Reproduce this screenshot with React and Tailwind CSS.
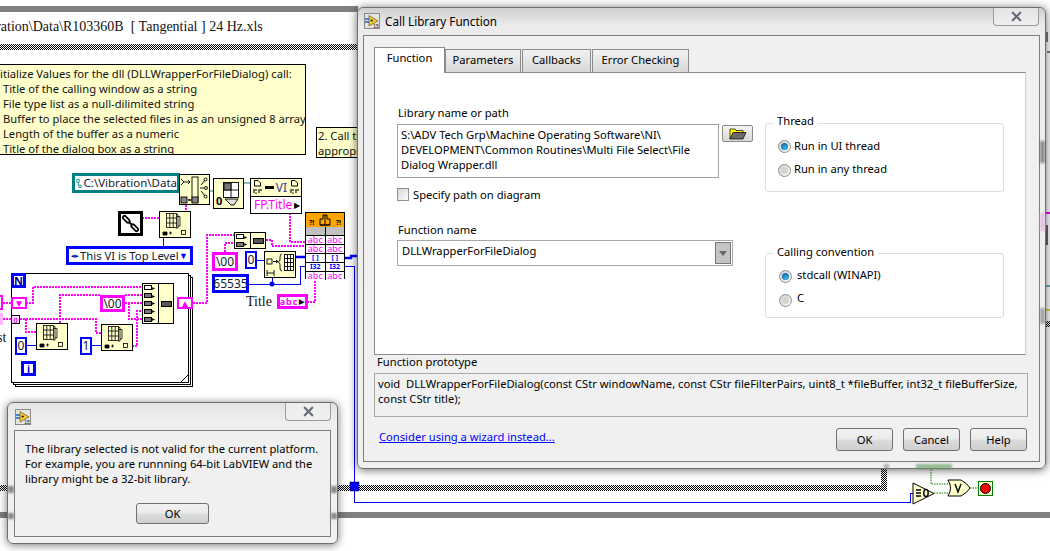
import { X } from 'lucide-react';

const pinkWires = [
  '0,303 11,303',
  '26,303 33,303 33,287 142,287',
  '0,319 11,319',
  '20,319 96,319 96,333 101,333',
  '26,319 26,332 36,332',
  '60,323 60,295 100,295',
  '125,295 142,295',
  '125,303 142,303',
  '129,303 129,319 142,319',
  '132,346 137,346 137,311 142,311',
  '193,303 207,303 207,235 234,235',
  '225,252 225,243 234,243',
  '266,240 272,240 272,246 306,246',
  '290,213 290,242 306,242',
  '307,302 315,302 315,279',
  '142,218 159,218',
  '186,205 186,211',
];

const blueWires = [
  '163,238 163,246',
  '27,345 36,345',
  '92,345 101,345',
  '257,260 264,260',
  '249,284 300,284 300,266 305,266',
  '272,284 272,278',
  '345,266 354,266 354,502 910,502 910,493 914,493',
];

function Wires() {
  return (
    <svg className="absolute inset-0" width="1050" height="551" viewBox="0 0 1050 551" fill="none">
      <defs>
        <pattern id="hatch" width="2" height="2" patternUnits="userSpaceOnUse">
          <rect width="2" height="2" fill="#fff" />
          <rect width="1" height="1" fill="#000" />
          <rect x="1" y="1" width="1" height="1" fill="#000" />
        </pattern>
      </defs>
      <rect x="0" y="485" width="887" height="6" fill="url(#hatch)" />
      <rect x="881" y="462" width="6" height="29" fill="url(#hatch)" />
      {pinkWires.map((points) => (
        <polyline key={points} points={points} stroke="#ff00ff" strokeWidth="2" strokeDasharray="2 1" shapeRendering="crispEdges" />
      ))}
      {blueWires.map((points) => (
        <polyline key={points} points={points} stroke="#0000ff" strokeWidth="1" shapeRendering="crispEdges" />
      ))}
      <path d="M296 257H305M345 258H351V256H358" stroke="#0000ff" strokeWidth="2.4" />
      <circle cx="272" cy="284" r="2.5" fill="#0000ff" />
      <rect x="350" y="482" width="9" height="9" fill="#0000ff" stroke="#000" strokeWidth="0.5" />
      <path d="M244 183H250M209 191H213" stroke="#008080" strokeWidth="1.2" />
      <path d="M931 462V484H948M934 493H948M970 488H978" stroke="#008000" strokeWidth="1" strokeDasharray="1.5 1" />
      <path d="M913 483V504L934 493.5Z" fill="#ffffcc" stroke="#000" />
      <path d="M916 490H921M916 493H921M916 496H921" stroke="#000" strokeWidth="1.4" />
      <ellipse cx="926" cy="493" rx="2.2" ry="3.6" stroke="#000" strokeWidth="1.4" />
      <path d="M948 480H961Q968 484 970 488Q968 492 961 496H948Q953 488 948 480Z" fill="#ffffcc" stroke="#000" />
      <path d="M955 484L958 492L961 484" stroke="#000" strokeWidth="1.4" />
      <rect x="978.5" y="481.5" width="14" height="14" fill="#ffffcc" stroke="#008000" />
      <circle cx="985.5" cy="488.5" r="5" fill="#f00000" stroke="#000" />
      <path d="M1046 213H1050" stroke="#ff00ff" strokeWidth="2" />
      <path d="M1047 225V245" stroke="#000" strokeWidth="1.2" />
      <path d="M1046 286H1050" stroke="#008080" strokeWidth="1.2" />
      <path d="M1046 310H1050" stroke="#d0c000" strokeWidth="1.5" />
      <rect x="1046" y="321" width="4" height="6" fill="url(#hatch)" />
      <path d="M1047 32V42M1047 52H1050" stroke="#000" />
    </svg>
  );
}

function ArrayGlyph() {
  return (
    <svg width="30" height="25" viewBox="0 0 30 25" fill="none" stroke="#000" strokeWidth="0.8">
      <path d="M8 2.5H18V4.5H20V14H18V16H16" />
      <path d="M16 4.5H18V14" />
      <rect x="6.5" y="1.5" width="10" height="14" fill="#ffffcc" />
      <path d="M6.5 6H16.5M6.5 11H16.5M9.8 1.5V15.5M13.2 1.5V15.5" />
      <path d="M3 20H7V23H3Z" fill="#000" />
      <path d="M9 21H12M10.5 19.5V22.5" />
      <rect x="21.5" y="18.5" width="4" height="4" />
    </svg>
  );
}

function BuildGlyph() {
  return (
    <svg width="29" height="29" viewBox="0 0 29 29" fill="none" stroke="#000" strokeWidth="0.9">
      <rect x="12" y="2" width="6" height="25" fill="#ffffcc" />
      <path d="M1 4L4 7L1 10M4 7H10M8 5L10 7L8 9" />
      <path d="M20 13H24M21 10L25 5M21 16L25 21" />
      <circle cx="25.5" cy="4.5" r="1.5" />
      <circle cx="26" cy="13" r="1.5" />
      <circle cx="25.5" cy="21.5" r="1.5" />
      <rect x="1" y="22" width="6" height="6" fill="#888" />
      <rect x="12" y="22" width="6" height="6" fill="#888" />
      <path d="M8 25H11" strokeWidth="1.5" />
    </svg>
  );
}

function PageMark() {
  return (
    <svg width="9" height="15" viewBox="0 0 9 15" fill="none" stroke="#000">
      <path d="M1.5 .5H5L7.5 3V6H1.5Z" />
      <path d="M1 9V13M3 9V11M3 12.5V14M6 9V13M8 9V11" strokeWidth="1.1" />
    </svg>
  );
}

function ConcatNode({ className, rows }) {
  return (
    <div className={`absolute flex border border-black bg-[#ffffcc] ${className}`}>
      <div className="flex w-[16px] flex-col justify-around border-r border-black px-[1px]">
        {rows.map((filled, i) => (
          <div key={i} className="flex items-center">
            <span className={`h-[5px] w-[8px] border border-black ${filled ? 'bg-[#777]' : 'bg-white'}`} />
            <span className="text-[6px] leading-[6px]">▸</span>
          </div>
        ))}
      </div>
      <div className="flex flex-1 items-center justify-center">
        <span className="h-[6px] w-[11px] border border-black bg-[#555]" />
      </div>
    </div>
  );
}

function Constant({ className, children }) {
  return (
    <div className={`absolute flex items-center justify-center border-[#0000ff] bg-white text-[12px] leading-none text-[#123] ${className}`}>
      {children}
    </div>
  );
}

function StringConstant({ className }) {
  return (
    <div className={`absolute flex items-center justify-center border-[3px] border-[#ff00ff] bg-white text-[12px] leading-none text-[#123] ${className}`}>
      \00
    </div>
  );
}

function LibraryNode() {
  const cell = 'border-t border-black bg-white';
  const pink = `${cell} text-[#ff00ff]`;
  const blue = `${cell} text-[7px] font-bold text-[#0000ff]`;
  return (
    <div className="absolute left-[305px] top-[212px] flex h-[67px] w-[40px] flex-col border border-black bg-white">
      <div className="flex h-[18px] items-end justify-between bg-[#ffa500] px-[3px] pb-[1px] text-[7px] font-bold leading-none">
        <span>?!</span>
        <svg width="12" height="13" viewBox="0 0 12 13" fill="none" stroke="#000">
          <path d="M1 12V6H4V2H8V6H11V12ZM1 12H11M6 2V12" />
        </svg>
        <span>?!</span>
      </div>
      <div className="grid flex-1 grid-cols-2 gap-x-[1px] bg-black text-center text-[9px] leading-[8px]">
        <span className="h-[8px] bg-[#c0c0c0]" />
        <span className="h-[8px] bg-[#c0c0c0]" />
        <span className={pink}>abc</span>
        <span className={pink}>abc</span>
        <span className={pink}>abc</span>
        <span className={pink}>abc</span>
        <span className={blue}>[ ]</span>
        <span className={blue}>[ ]</span>
        <span className={blue}>I32</span>
        <span className={blue}>I32</span>
        <span className={pink}>abc</span>
        <span className={pink}>abc</span>
      </div>
    </div>
  );
}

function Diagram() {
  const noteLines = [
    'Title of the calling window as a string',
    'File type list as a null-dilimited string',
    'Buffer to place the selected files in as an unsigned 8 array',
    'Length of the buffer as a numeric',
    'Title of the dialog box as a string',
  ];

  return (
    <>
      {/* loop frames sit under the wires */}
      <div className="absolute left-[15px] top-[277px] h-[110px] w-[178px] border border-black bg-white" />
      <div className="absolute left-[13px] top-[275px] h-[110px] w-[178px] border border-black bg-white" />
      <div className="absolute left-[11px] top-[273px] h-[110px] w-[178px] border border-black bg-white" />

      <Wires />

      {/* window chrome behind the dialogs */}
      <div className="absolute left-0 top-[6px] h-[6px] w-[358px] bg-[#808080]" />
      <div className="absolute left-0 top-[512px] h-[6px] w-[1050px] bg-[#808080]" />
      <div className="absolute left-0 top-[44px] h-[6px] w-[358px] bg-[repeating-conic-gradient(#000_0_25%,#fff_0_50%)] bg-[length:2px_2px]" />
      <div className="absolute -left-[24px] top-[16px] whitespace-pre font-['Liberation_Serif',serif] text-[14px] leading-[22px] text-[#111]">
        Vibration\Data\R103360B  [ Tangential ] 24 Hz.xls
      </div>

      {/* notes */}
      <div className="absolute -left-[10px] top-[64px] h-[91px] w-[316px] overflow-hidden border border-black bg-[#ffffcc] pl-[12px] pt-[1px] text-[11.2px] leading-[15px] text-[#111]">
        <div className="-ml-[26px] whitespace-nowrap">1. Initialize Values for the dll (DLLWrapperForFileDialog) call:</div>
        {noteLines.map((line) => (
          <div key={line} className="whitespace-nowrap">{line}</div>
        ))}
      </div>
      <div className="absolute left-[316px] top-[127px] h-[31px] w-[60px] overflow-hidden border border-black bg-[#ffffcc] pl-[1px] text-[11.2px] leading-[15px] text-[#111]">
        <div className="whitespace-nowrap">2. Call the</div>
        <div className="whitespace-nowrap">appropriate</div>
      </div>

      {/* constants and nodes above the loop */}
      <div className="absolute left-[72px] top-[173px] flex h-[20px] w-[108px] items-center gap-[2px] border-[3px] border-[#008080] bg-white pl-[1px] text-[11.5px] leading-none text-[#123]">
        <svg width="7" height="11" viewBox="0 0 7 11" fill="none" stroke="#008080"><path d="M1 .5H4V4H1ZM3 4V7.5M3.5 7.5H6.5V10.5H3.5Z" /></svg>
        <span className="whitespace-nowrap">C:\Vibration\Data</span>
      </div>
      <div className="absolute left-[179px] top-[174px] h-[31px] w-[31px] border border-black bg-[#ffffcc]"><BuildGlyph /></div>
      <div className="absolute left-[213px] top-[178px] h-[31px] w-[31px] border border-black bg-[#ffffcc]">
        <svg width="29" height="29" viewBox="0 0 29 29" fill="none" stroke="#000" strokeWidth="0.9">
          <rect x="9.5" y="3.5" width="15" height="15" fill="#fff" />
          <path d="M17 3.5V18.5M9.5 11H24.5" />
          <rect x="10" y="4" width="7" height="7" fill="#777" />
          <path d="M11 20H24L20 26H17Z" fill="#ddd" />
        </svg>
        <span className="absolute bottom-[2px] left-[2px] text-[11px] font-bold leading-none">0</span>
      </div>
      <div className="absolute left-[250px] top-[178px] flex h-[36px] w-[52px] flex-col border border-black bg-white">
        <div className="flex h-[18px] items-center justify-between border-b border-black bg-[#ffffcc] px-[2px]">
          <PageMark />
          <span className="flex items-center gap-[2px] text-[12px] leading-none text-[#3a3a8c]"><span className="h-[3px] w-[9px] bg-black" />VI</span>
          <PageMark />
        </div>
        <div className="flex flex-1 items-center justify-between pl-[3px] pr-[1px] text-[12px] leading-none text-[#ff00ff]">
          FP.Title<span className="text-[8px] text-black">▶</span>
        </div>
      </div>
      <div className="absolute left-[118px] top-[211px] flex h-[25px] w-[25px] items-center justify-center border-[3px] border-black bg-white">
        <svg width="19" height="19" viewBox="0 0 19 19" fill="none" strokeLinecap="round">
          <path d="M8 8L11 11" stroke="#000" strokeWidth="2" />
          <path d="M3.5 3.5L7 7M12 12L15.5 15.5" stroke="#000" strokeWidth="5" />
          <path d="M3.5 3.5L7 7M12 12L15.5 15.5" stroke="#fff" strokeWidth="1.6" />
        </svg>
      </div>
      <div className="absolute left-[159px] top-[211px] h-[27px] w-[32px] border border-black bg-[#ffffcc]"><ArrayGlyph /></div>
      <div className="absolute left-[66px] top-[246px] flex h-[19px] w-[127px] items-center justify-between whitespace-nowrap border-[3px] border-[#0000ff] bg-white px-[2px] text-[11.3px] leading-none text-[#123]">
        <span className="flex items-center gap-[1px]"><span className="text-[7px] text-[#0000cc]">◂▸</span>This VI is Top Level</span>
        <span className="text-[9px] text-[#0000ff]">▼</span>
      </div>

      <ConcatNode className="left-[234px] top-[232px] h-[17px] w-[32px]" rows={[false, true]} />
      <StringConstant className="left-[212px] top-[252px] h-[19px] w-[26px]" />
      <Constant className="left-[245px] top-[251px] h-[18px] w-[12px] border-2">0</Constant>
      <div className="absolute left-[264px] top-[251px] h-[27px] w-[32px] border border-black bg-[#ffffcc]">
        <svg width="30" height="25" viewBox="0 0 30 25" fill="none" stroke="#000" strokeWidth="0.9">
          <rect x="2" y="7" width="5" height="5" />
          <path d="M8 9.5H13M11 8L13 9.5L11 11" />
          <rect x="19.5" y="2.5" width="9" height="16" fill="#fff" />
          <path d="M22.5 2.5V18.5M25.5 2.5V18.5M19.5 6.5H28.5M19.5 10.5H28.5M19.5 14.5H28.5" />
          <path d="M17 2Q15 2 15 5V8L13.5 10L15 12V16Q15 19 17 19" />
          <path d="M2 18V24M2 21H9M9 18V24" />
        </svg>
      </div>
      <Constant className="left-[212px] top-[274px] h-[19px] w-[37px] border-[3px]">65535</Constant>
      <div className="absolute left-[246px] top-[292px] font-['Liberation_Serif',serif] text-[14px] leading-[20px] text-[#111]">Title</div>
      <div className="absolute left-[277px] top-[294px] flex h-[15px] w-[31px] items-center justify-center gap-[1px] border-[3px] border-[#ff00ff] bg-white text-[9px] font-bold leading-none tracking-[1px] text-[#ff00ff]">
        abc<span className="text-[7px] text-black">▶</span>
      </div>

      <LibraryNode />

      {/* for loop contents */}
      <svg className="absolute left-[180px] top-[374px]" width="9" height="9" viewBox="0 0 9 9" fill="#fff" stroke="#000"><path d="M.5 8.5L8.5 .5V8.5Z" /></svg>
      <div className="absolute left-[11px] top-[273px] flex h-[15px] w-[15px] items-center justify-center border-[3px] border-[#0000ff] bg-white text-[11px] font-bold leading-none text-[#000080]">N</div>
      <div className="absolute left-[11px] top-[297px] flex h-[12px] w-[16px] items-center justify-center border-[2px] border-[#ff00ff] bg-white text-[10px] leading-none text-[#ff00ff]">▼</div>
      <div className="absolute left-[177px] top-[297px] flex h-[12px] w-[16px] items-center justify-center border-[2px] border-[#ff00ff] bg-white text-[10px] leading-none text-[#ff00ff]">▲</div>
      <div className="absolute left-[11px] top-[315px] flex h-[9px] w-[9px] items-center justify-center border border-black bg-[#ffd0ff] text-[6px] font-bold leading-none text-[#c000c0]">[]</div>
      <div className="absolute -left-[8px] top-[295px] h-[15px] w-[11px] border-[2px] border-[#ff00ff] bg-white" />
      <div className="absolute -left-[8px] top-[313px] h-[12px] w-[11px] bg-[#ffb8ff]" />
      <div className="absolute -left-[3px] top-[328px] font-['Liberation_Serif',serif] text-[14px] leading-[20px] text-[#111]">st</div>
      <Constant className="left-[15px] top-[337px] h-[18px] w-[12px] border-2">0</Constant>
      <Constant className="left-[80px] top-[337px] h-[18px] w-[12px] border-2">1</Constant>
      <div className="absolute left-[21px] top-[361px] flex h-[15px] w-[15px] items-center justify-center border-[3px] border-[#0000ff] bg-white text-[10px] font-bold leading-none text-[#0000ff]">i</div>
      <div className="absolute left-[36px] top-[323px] h-[27px] w-[32px] border border-black bg-[#ffffcc]"><ArrayGlyph /></div>
      <div className="absolute left-[101px] top-[324px] h-[27px] w-[32px] border border-black bg-[#ffffcc]"><ArrayGlyph /></div>
      <ConcatNode className="left-[142px] top-[283px] h-[41px] w-[32px]" rows={[false, true, true, true, true]} />
      <StringConstant className="left-[100px] top-[295px] h-[17px] w-[25px]" />
    </>
  );
}

function WindowIcon() {
  return (
    <svg width="16" height="16" viewBox="0 0 16 16" className="shrink-0">
      <rect x=".5" y=".5" width="15" height="15" fill="#e4e4e4" stroke="#8a8a8a" />
      <path d="M5 2.5V13L14 8Z" fill="#f2c838" stroke="#6b5a10" strokeWidth="0.7" />
      <path d="M1 6H5M1 9H5" stroke="#1464c8" strokeWidth="1.4" />
      <path d="M6.5 7.5H9M7.7 6.3V8.7" stroke="#000" strokeWidth="0.7" />
      <text x="9.3" y="14.5" fontSize="5" fontFamily="Liberation Sans, sans-serif" fill="#111">15</text>
    </svg>
  );
}

function CloseButton() {
  return (
    <div className="absolute right-[6px] top-0 flex h-[18px] w-[46px] items-center justify-center rounded-b-[4px] border border-t-0 border-[#9a9a9a] bg-[#f2f2f2]/60">
      <X className="h-[15px] w-[15px] text-[#666b78]" strokeWidth={3.5} />
    </div>
  );
}

function PushButton({ className, children }) {
  return (
    <button
      type="button"
      className={`flex items-center justify-center rounded-[3px] border border-[#707070] bg-[linear-gradient(180deg,#f2f2f2_0%,#ebebeb_48%,#dcdcdc_52%,#cfcfcf_100%)] text-[11.2px] leading-none text-black ${className}`}
    >
      {children}
    </button>
  );
}

function Radio({ checked }) {
  return (
    <span className="flex h-[13px] w-[13px] shrink-0 items-center justify-center rounded-full border border-[#8e8f8f] bg-[linear-gradient(135deg,#d0d0d0,#fafafa)]">
      <span className={`h-[7px] w-[7px] rounded-full ${checked ? 'bg-[radial-gradient(circle_at_60%_70%,#38b6f0,#0a4f86)]' : 'bg-[#d4d4d4]'}`} />
    </span>
  );
}

function GroupBox({ title, className, labelClass, children }) {
  return (
    <div className={`relative rounded-[3px] border border-[#d5dfe5] ${className}`}>
      <span className={`absolute left-[7px] bg-white px-[4px] leading-[16px] text-black ${labelClass}`}>{title}</span>
      {children}
    </div>
  );
}

function FunctionTab() {
  return (
    <div className="flex h-[283px] w-[652px] gap-[32px] border border-[#8c8c8c] border-r-[#d0d0d0] bg-white pl-[22px] pt-[33px]">
      <div className="w-[336px]">
        <div className="h-[18px] pl-[1px] leading-[14px]">Library name or path</div>
        <div className="flex items-start gap-[3px]">
          <div className="h-[54px] w-[322px] shrink-0 whitespace-nowrap border border-[#a0a0a0] px-[3px] pt-[2px] leading-[15px]">
            S:\ADV Tech Grp\Machine Operating Software\NI\
            <br />
            DEVELOPMENT\Common Routines\Multi File Select\File
            <br />
            Dialog Wrapper.dll
          </div>
          <button type="button" className="mt-[1px] flex h-[17px] w-[31px] shrink-0 items-center justify-center rounded-[2px] border border-[#8a8a8a] bg-[linear-gradient(180deg,#f4f4f4,#d8d8d8)]">
            <svg width="18" height="13" viewBox="0 0 18 13" stroke="#000" strokeWidth="0.7">
              <path d="M1 12V2H6L7 3.5H14V6H5Z" fill="#ffff00" />
              <path d="M1 12L4 5.5H17L14 12Z" fill="#6a6a6a" />
            </svg>
          </button>
        </div>
        <div className="mt-[9px] flex h-[14px] items-center gap-[4px] leading-none">
          <span className="h-[13px] w-[12px] border border-[#8e8f8f] bg-[linear-gradient(135deg,#d8d8d8,#fafafa)]" />
          <span className="mt-[2px]">Specify path on diagram</span>
        </div>
        <div className="mt-[21px] h-[18px] pl-[1px] leading-[16px]">Function name</div>
        <div className="flex h-[26px] items-center justify-between border border-[#a8a8a8] pl-[4px] pr-[1px] leading-none">
          <span className="-mt-[5px]">DLLWrapperForFileDialog</span>
          <span className="flex h-[22px] w-[16px] items-center justify-center border border-[#777] bg-[#c4c4c4]">
            <span className="h-0 w-0 border-x-[4px] border-t-[5px] border-x-transparent border-t-[#666]" />
          </span>
        </div>
      </div>

      <div className="flex w-[239px] flex-col pt-[17px]">
        <GroupBox title="Thread" labelClass="-top-[11px]" className="flex h-[69px] flex-col gap-[11px] pl-[12px] pt-[16px]">
          <div className="flex h-[13px] items-center gap-[3px] leading-none"><Radio checked /><span className="-mt-[2px]">Run in UI thread</span></div>
          <div className="flex h-[13px] items-center gap-[3px] leading-none"><Radio /><span className="-mt-[4px]">Run in any thread</span></div>
        </GroupBox>
        <GroupBox title="Calling convention" labelClass="-top-[10px]" className="mt-[61px] flex h-[65px] flex-col gap-[11px] pl-[13px] pt-[16px]">
          <div className="flex h-[13px] items-center gap-[5px] leading-none"><Radio checked /><span className="-mt-[3px]">stdcall (WINAPI)</span></div>
          <div className="flex h-[13px] items-center gap-[5px] leading-none"><Radio /><span className="-mt-[6px]">C</span></div>
        </GroupBox>
      </div>
    </div>
  );
}

function CallLibraryDialog() {
  const tabs = [
    ['Parameters', 'w-[76px]'],
    ['Callbacks', 'w-[69px]'],
    ['Error Checking', 'w-[97px]'],
  ];

  return (
    <div className="absolute left-[357px] top-[7px] h-[462px] w-[689px] rounded-[6px] border border-[#6e6e6e] bg-[linear-gradient(180deg,#cfcfcf_0px,#ececec_18px,#f0f0f0_100%)] px-[5px] pb-[6px] pt-[27px] shadow-[0_1px_10px_rgba(0,0,0,0.6)]">
      <div className="absolute left-[6px] top-[5px] flex items-center gap-[5px] text-[11.7px] leading-[16px] text-black">
        <WindowIcon />
        Call Library Function
      </div>
      <CloseButton />
      <div className="h-full border border-[#7d7d7d] bg-[#f0f0f0] pl-[10px] text-[11.2px] text-black">
        <div className="flex h-[36px] items-end">
          <div className="relative z-10 -mb-[1px] flex h-[26px] w-[71px] items-start justify-center border border-b-0 border-[#8c8c8c] bg-white pt-[2px] leading-[16px]">Function</div>
          <div className="flex items-end gap-[1px]">
            {tabs.map(([label, width]) => (
              <div key={label} className={`flex h-[23px] items-center justify-center border border-b-0 border-[#8c8c8c] bg-[linear-gradient(180deg,#f2f2f2,#d8d8d8)] pb-[2px] leading-none ${width}`}>
                {label}
              </div>
            ))}
          </div>
        </div>
        <FunctionTab />
        <div className="h-[18px] pl-[3px] leading-[14px]">Function prototype</div>
        <div className="h-[44px] w-[654px] whitespace-nowrap border border-[#a8a8a8] px-[3px] pt-[2px] leading-[15px]">
          void&nbsp; DLLWrapperForFileDialog(const CStr windowName, const CStr fileFilterPairs, uint8_t *fileBuffer, int32_t fileBufferSize,
          <br />
          const CStr title);
        </div>
        <div className="mt-[11px] flex w-[654px] items-start justify-between pl-[5px] pr-[1px]">
          <span className="mt-[1px] leading-[16px] text-[#0000ff] underline">Consider using a wizard instead...</span>
          <div className="flex gap-[10px]">
            <PushButton className="h-[23px] w-[57px]">OK</PushButton>
            <PushButton className="h-[23px] w-[57px]">Cancel</PushButton>
            <PushButton className="h-[23px] w-[57px]">Help</PushButton>
          </div>
        </div>
      </div>
      <span className="absolute left-[526px] top-[456px] h-[5px] w-[5px] bg-[#888]/60 blur-[1px]" />
      <span className="absolute left-[558px] top-[456px] h-[5px] w-[36px] bg-[#5a9a5a]/60 blur-[1px]" />
      <span className="absolute right-0 top-[133px] h-[22px] w-[5px] bg-[#666]/70 blur-[1px]" />
      <span className="absolute right-0 top-[205px] h-[18px] w-[5px] bg-[#e0b0e0]/70 blur-[1px]" />
      <span className="absolute right-0 top-[300px] h-[16px] w-[5px] bg-[#777]/60 blur-[1px]" />
    </div>
  );
}

function ErrorDialog() {
  return (
    <div className="absolute left-[7px] top-[402px] h-[142px] w-[331px] rounded-[6px] border border-[#6e6e6e] bg-[linear-gradient(180deg,#e4e4e4_0px,#efefef_20px,#f0f0f0_100%)] px-[6px] pb-[6px] pt-[27px] shadow-[0_1px_8px_rgba(0,0,0,0.55)]">
      <div className="absolute left-[7px] top-[6px]"><WindowIcon /></div>
      <CloseButton />
      <span className="absolute left-0 top-[83px] h-[7px] w-[6px] bg-[#888] blur-[1px]" />
      <span className="absolute left-0 top-[110px] h-[6px] w-[6px] bg-[#888] blur-[1px]" />
      <span className="absolute right-0 top-[83px] h-[7px] w-[6px] bg-[#888] blur-[1px]" />
      <span className="absolute right-0 top-[110px] h-[6px] w-[6px] bg-[#888] blur-[1px]" />
      <div className="flex h-full flex-col items-center border border-[#7d7d7d] bg-[#f0f0f0] pt-[10px] text-black">
        <div className="h-[62px] w-full whitespace-nowrap pl-[10px] text-[11.2px] leading-[15px]">
          The library selected is not valid for the current platform.
          <br />
          For example, you are runnning 64-bit LabVIEW and the
          <br />
          library might be a 32-bit library.
        </div>
        <PushButton className="h-[21px] w-[73px]">OK</PushButton>
      </div>
    </div>
  );
}

export default function App() {
  return (
    <div className="relative h-[551px] w-[1050px] overflow-hidden bg-white font-['Noto_Sans',sans-serif]">
      <Diagram />
      <CallLibraryDialog />
      <ErrorDialog />
    </div>
  );
}
